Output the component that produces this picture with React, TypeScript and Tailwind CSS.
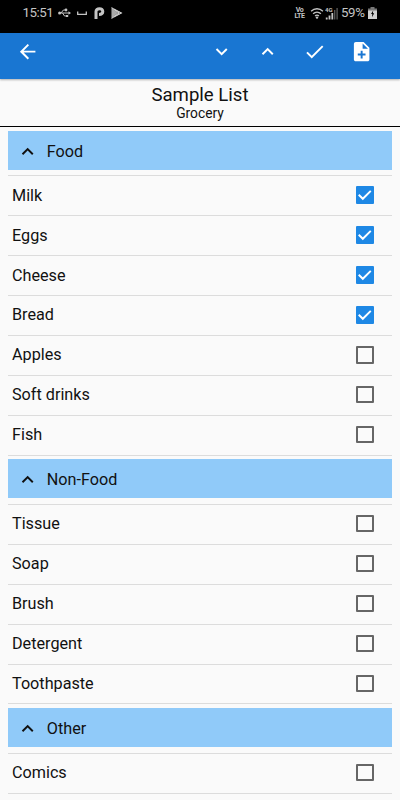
import { useState } from 'react';
import { MdArrowBack, MdCheck, MdExpandLess, MdExpandMore, MdNoteAdd } from 'react-icons/md';

interface Item { name: string; done: boolean; }
interface Group { title: string; items: Item[]; }

const toItems = (names: string[], done = false): Item[] => names.map(name => ({ name, done }));

const INITIAL_GROUPS: Group[] = [
  { title: 'Food', items: [...toItems(['Milk', 'Eggs', 'Cheese', 'Bread'], true), ...toItems(['Apples', 'Soft drinks', 'Fish'])] },
  { title: 'Non-Food', items: toItems(['Tissue', 'Soap', 'Brush', 'Detergent', 'Toothpaste']) },
  { title: 'Other', items: toItems(['Comics']) },
];

function StatusBar() {
  return (
    <div className="h-[33px] bg-black text-[#c4c4c4] flex items-start justify-between pl-[22.5px] pr-[23px] pt-[5px]">
      <div className="flex items-center h-4">
        <span className="text-[13.3px] leading-4 w-[35px] tracking-[-0.5px]">15:51</span>
        {/* usb */}
        <svg width="13" height="10" viewBox="0 0 13 10" fill="none" stroke="currentColor" strokeWidth="1">
          <path d="M1 5h10M3 5l2.4-3h2M4.5 5l2 3h2" />
          <circle cx="1.6" cy="5" r="1.5" fill="currentColor" stroke="none" />
          <circle cx="8" cy="2" r="1.4" fill="currentColor" stroke="none" />
          <path d="M8 7h2.2v2H8zM10.5 3.3 13 5l-2.5 1.7z" fill="currentColor" stroke="none" />
        </svg>
        <svg className="ml-[6.5px]" width="10" height="10" viewBox="0 0 10 10" fill="none" stroke="currentColor" strokeWidth="1.3">
          <path d="M.7 3.5v2.8h8.6V3.5" />
        </svg>
        {/* parking */}
        <svg className="ml-[6.5px]" width="11" height="12" viewBox="0 0 11 12" fill="none" stroke="currentColor">
          <path d="M2 12V4.6C2 2.8 3.4 1.8 5.4 1.8c2.2 0 3.4 1 3.4 2.8S7.6 7.5 5 7.5" strokeWidth="3" />
        </svg>
        {/* play store */}
        <svg className="ml-[6px]" width="12" height="12" viewBox="0 0 12 12">
          <path d="M.6.5v11L11.6 6z" fill="#777" />
          <path d="M.6.5 6.5 6 .6 11.5z" fill="#a8a8a8" />
          <path d="M.6.5 8 6 .6 11.5M3 2l7.5 4L3 10" fill="none" stroke="#d0d0d0" strokeWidth="1" />
        </svg>
      </div>
      <div className="flex items-center h-4">
        <div className="flex flex-col items-center text-[7px] leading-[8px] -my-px font-bold w-[10px] tracking-[-0.4px] mr-[1px]">
          <span className="h-[6.5px]">Vo</span>
          <span>LTE</span>
        </div>
        {/* wifi */}
        <svg className="ml-[4px]" width="14" height="12" viewBox="0 0 13 12" fill="none" stroke="currentColor" strokeWidth="1.3">
          <path d="M.6 4.3c3.4-3.4 8.4-3.4 11.8 0M2.6 6.8c2.3-2.3 5.5-2.3 7.8 0M4.6 9c1.1-1.1 2.7-1.1 3.8 0" />
          <circle cx="6.5" cy="10.6" r="1.2" fill="currentColor" stroke="none" />
        </svg>
        {/* mobile signal */}
        <svg className="ml-[1.5px]" width="13" height="13" viewBox="0 0 13 13">
          <text x="0" y="5" fontSize="6" fontWeight="700" fill="currentColor">4G</text>
          <path d="M.8 10.5h1.8v2H.8zM3.6 8.5h1.8v4H3.6zM6.4 6h1.8v6.5H6.4z" fill="currentColor" />
          <path d="M9 3h1.4v9.5H9zM11.4 1h1.4v11.5h-1.4z" fill="#555" />
        </svg>
        <span className="ml-[3px] text-[13.3px] leading-4 w-[24px] tracking-[-0.4px]">59%</span>
        {/* battery */}
        <svg className="ml-[3px]" width="9" height="12" viewBox="0 0 9 12">
          <path d="M2.5 0h4v1.5H9V12H0V1.5h2.5z" fill="#777" />
          <path d="M0 3.5h9V12H0z" fill="#d0d0d0" />
          <path d="M5.2 3.5 3 7h1.3L4 10.2 6.2 6.3H4.9z" fill="#000" />
        </svg>
      </div>
    </div>
  );
}

interface ToolbarProps { onCollapse: (collapsed: boolean) => void; }

function Toolbar({ onCollapse }: ToolbarProps) {
  return (
    <div className="relative h-[46px] bg-[#1976d2] text-white shadow-[0_1px_2px_rgba(0,0,0,0.3)] flex items-start justify-between pt-[7px] px-[15.5px]">
      <button className="h-6" aria-label="Back"><MdArrowBack size={23.3} /></button>
      <div className="flex">
        <button className="w-[46.67px] h-6 flex justify-center" aria-label="Expand all" onClick={() => onCollapse(false)}><MdExpandMore size={23.3} /></button>
        <button className="w-[46.67px] h-6 flex justify-center" aria-label="Collapse all" onClick={() => onCollapse(true)}><MdExpandLess size={23.3} /></button>
        <button className="w-[46.67px] h-6 flex justify-center" aria-label="Done"><MdCheck size={23.3} /></button>
        <button className="w-[46.67px] h-6 flex justify-center" aria-label="Add item"><MdNoteAdd size={23.3} /></button>
      </div>
    </div>
  );
}

function Checkbox({ checked }: { checked: boolean }) {
  if (!checked) return <span className="size-[17.5px] mb-[1.4px] border-2 border-[#666] rounded-[1px]" />;
  return (
    <span className="size-[17.5px] mb-[1.4px] bg-[#1e88e5] rounded-[1px] flex items-center justify-center">
      <svg width="18" height="18" viewBox="0 0 18 18" fill="none" stroke="#fff" strokeWidth="2">
        <path d="M2.8 8.7 7 12.9 15.2 4.7" />
      </svg>
    </span>
  );
}

export default function App() {
  const [groups, setGroups] = useState(INITIAL_GROUPS);
  const [collapsed, setCollapsed] = useState<string[]>([]);

  const toggleGroup = (title: string) =>
    setCollapsed(prev => (prev.includes(title) ? prev.filter(t => t !== title) : [...prev, title]));

  const toggleItem = (title: string, name: string) =>
    setGroups(prev => prev.map(g => g.title !== title ? g : {
      ...g,
      items: g.items.map(i => (i.name === name ? { ...i, done: !i.done } : i)),
    }));

  return (
    <div className="h-[800px] flex flex-col overflow-hidden bg-[#fafafa] text-[#111] font-['Roboto',sans-serif]">
      <StatusBar />
      <Toolbar onCollapse={all => setCollapsed(all ? groups.map(g => g.title) : [])} />

      <div className="h-12 shrink-0 border-b border-black text-center pt-[5px]">
        <div className="text-[18.6px] leading-[22px]">Sample List</div>
        <div className="text-[13.8px] leading-[15px]">Grocery</div>
      </div>

      <div className="px-2 pt-1">
        {groups.map(({ title, items }) => (
          <section key={title}>
            <button
              onClick={() => toggleGroup(title)}
              className="w-full h-[38.8px] mb-[5.7px] bg-[#90caf9] flex items-center pl-[7.5px] pt-[2px] text-[16.2px]"
            >
              {collapsed.includes(title) ? <MdExpandMore size={23.3} /> : <MdExpandLess size={23.3} />}
              <span className="ml-[8px] pt-px">{title}</span>
            </button>
            {!collapsed.includes(title) && (
              <div className="border-t border-[#dcdcdc] mb-[3.75px]">
                {items.map(({ name, done }) => (
                  <button
                    key={name}
                    onClick={() => toggleItem(title, name)}
                    className="w-full h-[39.9px] border-b border-[#dcdcdc] flex items-center justify-between pl-[4px] pr-[18.5px] text-[16.2px]"
                  >
                    <span>{name}</span>
                    <Checkbox checked={done} />
                  </button>
                ))}
              </div>
            )}
          </section>
        ))}
      </div>
    </div>
  );
}
